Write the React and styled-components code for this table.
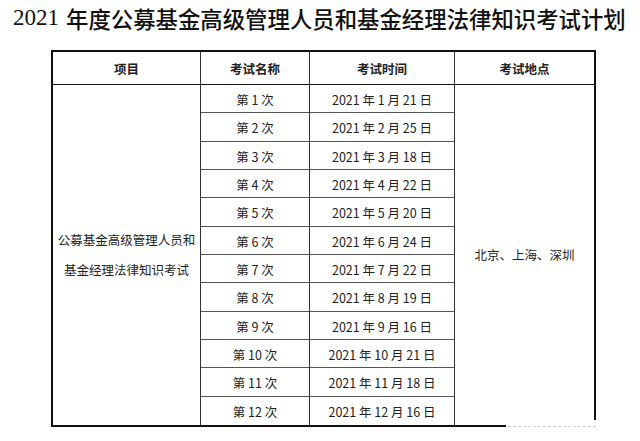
import React from "react";
import styled, { createGlobalStyle } from "styled-components";

const GlobalStyle = createGlobalStyle`
  html, body {
    margin: 0;
    padding: 0;
    background: #fff;
  }
  body {
    width: 640px;
    height: 441px;
    overflow: hidden;
    font-family: "Noto Sans CJK SC", sans-serif;
    color: #222;
  }
`;

const rounds = [
  ["第 1 次", "2021 年 1 月 21 日"],
  ["第 2 次", "2021 年 2 月 25 日"],
  ["第 3 次", "2021 年 3 月 18 日"],
  ["第 4 次", "2021 年 4 月 22 日"],
  ["第 5 次", "2021 年 5 月 20 日"],
  ["第 6 次", "2021 年 6 月 24 日"],
  ["第 7 次", "2021 年 7 月 22 日"],
  ["第 8 次", "2021 年 8 月 19 日"],
  ["第 9 次", "2021 年 9 月 16 日"],
  ["第 10 次", "2021 年 10 月 21 日"],
  ["第 11 次", "2021 年 11 月 18 日"],
  ["第 12 次", "2021 年 12 月 16 日"],
];

function App() {
  return (
    <Page>
      <GlobalStyle />
      <Title>
        <Num>2021</Num>
        <Han>年度公募基金高级管理人员和基金经理法律知识考试计划</Han>
      </Title>
      <Table>
        <HeadCell>项目</HeadCell>
        <HeadCell>考试名称</HeadCell>
        <HeadCell>考试时间</HeadCell>
        <HeadCell last>考试地点</HeadCell>
        <SpanCell>
          <span>公募基金高级管理人员和</span>
          <span>基金经理法律知识考试</span>
        </SpanCell>
        {rounds.map(([name, date], i) => (
          <React.Fragment key={name}>
            <Cell col={2} row={i + 2} end={i === rounds.length - 1}>
              {name}
            </Cell>
            <Cell col={3} row={i + 2} end={i === rounds.length - 1}>
              {date}
            </Cell>
          </React.Fragment>
        ))}
        <SpanCell last>北京、上海、深圳</SpanCell>
      </Table>
      <Watermark />
    </Page>
  );
}

const Page = styled.div`
  position: relative;
  width: 640px;
  height: 441px;
`;

const Title = styled.h1`
  margin: 0;
  padding-left: 13px;
  height: 36px;
  display: flex;
  align-items: center;
  gap: 7px;
  white-space: nowrap;
  font-weight: 400;
  color: #111;
`;

const Num = styled.span`
  font-family: "Liberation Serif", serif;
  font-size: 23px;
`;

const Han = styled.span`
  font-family: "Noto Sans CJK SC", sans-serif;
  font-size: 22.4px;
  font-weight: 500;
  letter-spacing: 0;
`;

const Table = styled.div`
  box-sizing: border-box;
  margin: 14px 0 0 51px;
  width: 545px;
  height: 377px;
  border: 2px solid #111;
  display: grid;
  grid-template-columns: 148px 109px 145px 139px;
  grid-template-rows: 33px repeat(12, 1fr);
  font-size: 12.5px;
`;

const HeadCell = styled.div`
  display: flex;
  align-items: center;
  justify-content: center;
  font-weight: 700;
  color: #222;
  border-bottom: 1px solid #111;
  border-right: ${(p) => (p.last ? "none" : "1px solid #333")};
`;

const SpanCell = styled.div`
  grid-row: 2 / 14;
  grid-column: ${(p) => (p.last ? 4 : 1)};
  display: flex;
  flex-direction: column;
  align-items: center;
  justify-content: center;
  line-height: 30px;
  color: #222;
  border-right: ${(p) => (p.last ? "none" : "1px solid #333")};
`;

const Cell = styled.div`
  grid-column: ${(p) => p.col};
  grid-row: ${(p) => p.row};
  display: flex;
  align-items: center;
  justify-content: center;
  padding-top: 2px;
  color: #222;
  border-right: 1px solid #333;
  border-bottom: ${(p) => (p.end ? "none" : "1px solid #555")};
`;

const Watermark = styled.div`
  position: absolute;
  left: 506px;
  top: 420px;
  width: 92px;
  height: 14px;
  background: #fff;
  &::after {
    content: "";
    position: absolute;
    left: 2px;
    right: 2px;
    top: 6px;
    border-top: 1px dashed #cfcfcf;
  }
`;

export default App;
